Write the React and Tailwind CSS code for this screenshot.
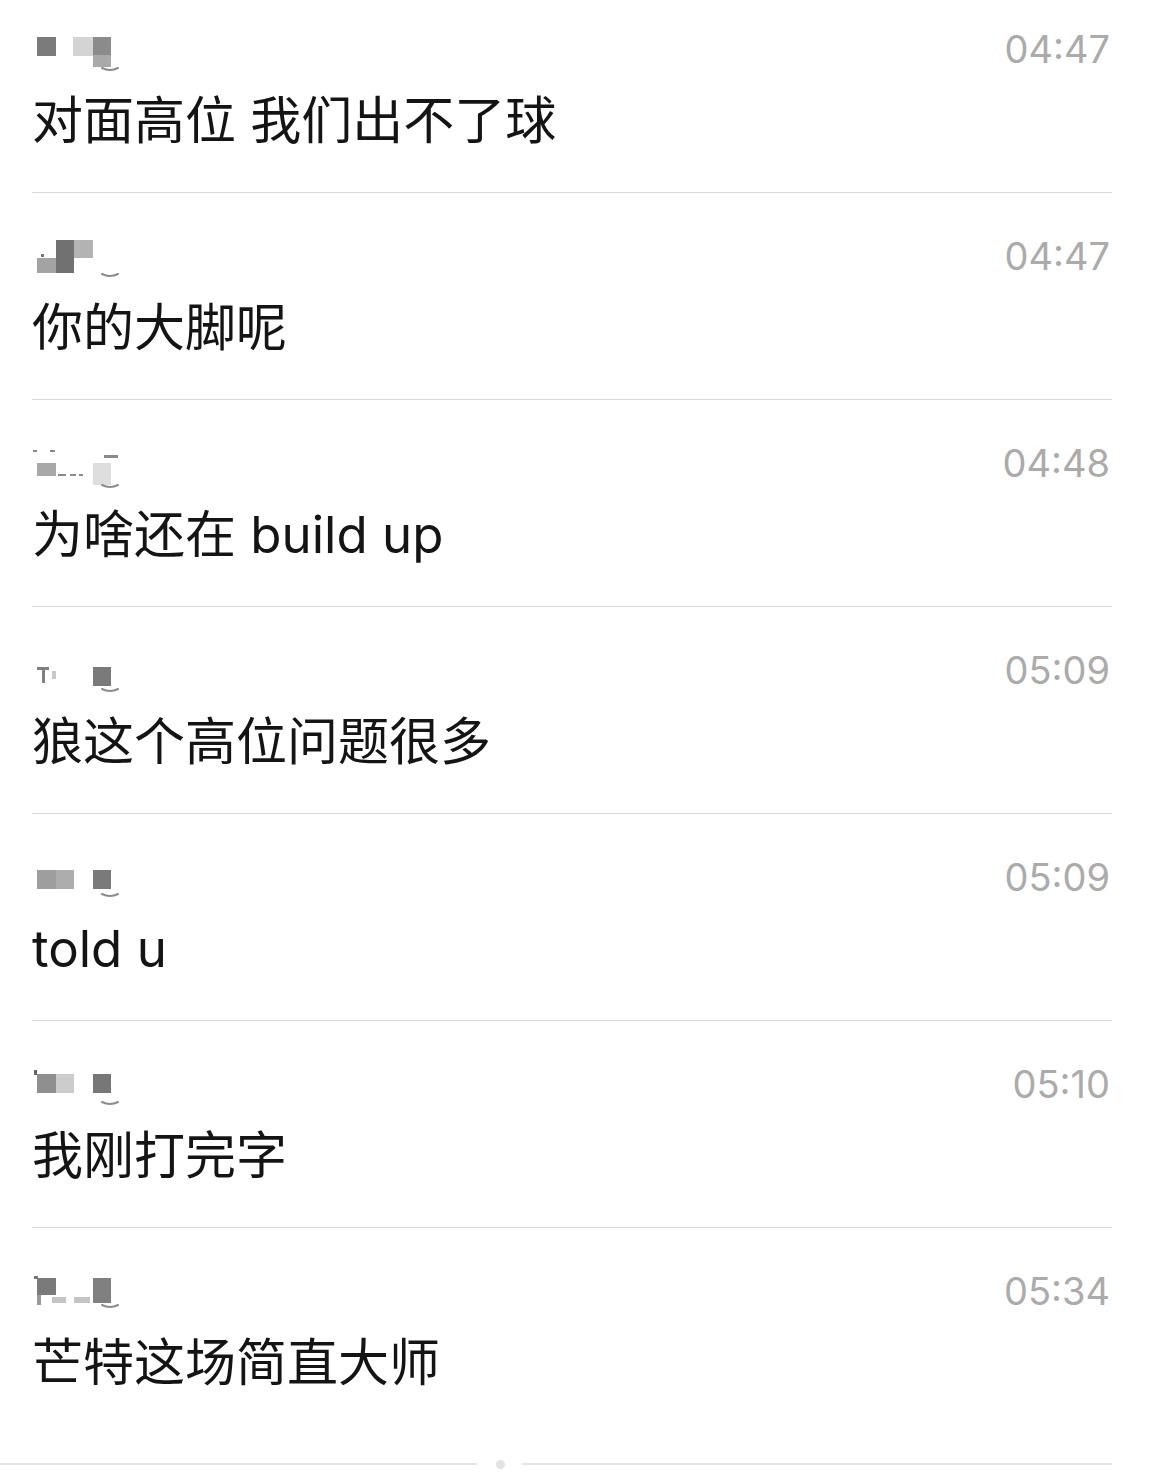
import React from 'react';

// pixelated (censored) user names, drawn as blocks in a 100x50 box
const names = [
  [
    { x: 5, y: 12, w: 19, h: 19, c: '#7b7b7b' },
    { x: 41, y: 12, w: 20, h: 19, c: '#d4d4d4' },
    { x: 61, y: 12, w: 18, h: 18, c: '#8b8b8b' },
    { x: 61, y: 30, w: 18, h: 12, c: '#a9a9a9' },
  ],
  [
    { x: 5, y: 26, w: 19, h: 15, c: '#a3a3a3' },
    { x: 24, y: 8, w: 18, h: 33, c: '#717171' },
    { x: 42, y: 8, w: 19, h: 18, c: '#b3b3b3' },
    { x: 9, y: 22, w: 3, h: 3, c: '#777777' },
  ],
  [
    { x: 5, y: 24, w: 19, h: 13, c: '#a8a8a8' },
    { x: 61, y: 24, w: 18, h: 22, c: '#dedede' },
    { x: 1, y: 11, w: 4, h: 2, c: '#888888' },
    { x: 18, y: 11, w: 5, h: 2, c: '#888888' },
    { x: 26, y: 35, w: 8, h: 2, c: '#8a8a8a' },
    { x: 38, y: 35, w: 6, h: 2, c: '#8a8a8a' },
    { x: 47, y: 35, w: 4, h: 2, c: '#8a8a8a' },
    { x: 72, y: 16, w: 14, h: 3, c: '#8a8a8a' },
  ],
  [
    { x: 5, y: 21, w: 12, h: 3, c: '#808080' },
    { x: 10, y: 21, w: 3, h: 16, c: '#808080' },
    { x: 20, y: 25, w: 4, h: 8, c: '#c8c8c8' },
    { x: 61, y: 21, w: 18, h: 19, c: '#7a7a7a' },
  ],
  [
    { x: 5, y: 17, w: 19, h: 19, c: '#9e9e9e' },
    { x: 24, y: 17, w: 18, h: 19, c: '#adadad' },
    { x: 61, y: 17, w: 18, h: 19, c: '#7a7a7a' },
  ],
  [
    { x: 2, y: 10, w: 3, h: 5, c: '#666666' },
    { x: 5, y: 14, w: 19, h: 19, c: '#8f8f8f' },
    { x: 24, y: 14, w: 18, h: 19, c: '#cccccc' },
    { x: 61, y: 14, w: 18, h: 19, c: '#777777' },
  ],
  [
    { x: 2, y: 9, w: 4, h: 3, c: '#777777' },
    { x: 5, y: 11, w: 19, h: 17, c: '#7a7a7a' },
    { x: 61, y: 11, w: 18, h: 25, c: '#808080' },
    { x: 5, y: 28, w: 4, h: 10, c: '#9a9a9a' },
    { x: 20, y: 30, w: 14, h: 6, c: '#c4c4c4' },
    { x: 42, y: 30, w: 16, h: 6, c: '#c4c4c4' },
  ],
];

const tails = [43, 42, 46, 43, 41, 42, 38];

const messages = [
  { time: '04:47', text: '对面高位 我们出不了球' },
  { time: '04:47', text: '你的大脚呢' },
  { time: '04:48', text: '为啥还在 build up' },
  { time: '05:09', text: '狼这个高位问题很多' },
  { time: '05:09', text: 'told u' },
  { time: '05:10', text: '我刚打完字' },
  { time: '05:34', text: '芒特这场简直大师' },
];

function Name({ blocks, tail }) {
  return (
    <svg width="100" height="48" viewBox="0 0 100 48" className="block overflow-visible">
      {blocks.map((b, i) => (
        <rect key={i} x={b.x} y={b.y} width={b.w} height={b.h} fill={b.c} />
      ))}
      <path
        d={`M70 ${tail} Q78 ${tail + 4} 86 ${tail}`}
        stroke="#8a8a8a"
        strokeWidth="2"
        fill="none"
        strokeLinecap="round"
      />
    </svg>
  );
}

function Row({ item, index, last }) {
  const pad = index === 0 ? 'pt-[25px]' : 'pt-[39px]';
  return (
    <div className={`${pad} ${last ? 'pb-[68px]' : 'pb-[47px] border-b border-[#d9d9d9]'}`}>
      <div className="flex h-[48px] items-center justify-between">
        <Name blocks={names[index]} tail={tails[index]} />
        <span className="pr-[2px] text-[38px] leading-none text-[#ababab]">{item.time}</span>
      </div>
      <div className="mt-[24px] h-[48px] whitespace-nowrap text-[51px] leading-[48px] text-[#141414]">
        {item.text}
      </div>
    </div>
  );
}

export default function App() {
  return (
    <div
      className="h-[1482px] w-[1160px] overflow-hidden bg-white"
      style={{ fontFamily: 'Inter, "Noto Sans CJK SC", sans-serif' }}
    >
      <div className="w-[1112px] pl-[32px]">
        {messages.map((m, i) => (
          <Row key={i} item={m} index={i} last={i === messages.length - 1} />
        ))}
      </div>
      <div className="flex h-[18px] w-[1112px] items-center">
        <div className="h-[2px] w-[477px] bg-[#e4e4e4]" />
        <div className="ml-[19px] h-[9px] w-[9px] rounded-full bg-[#e2e2e2]" />
        <div className="ml-[17px] h-[2px] flex-1 bg-[#e4e4e4]" />
      </div>
    </div>
  );
}
